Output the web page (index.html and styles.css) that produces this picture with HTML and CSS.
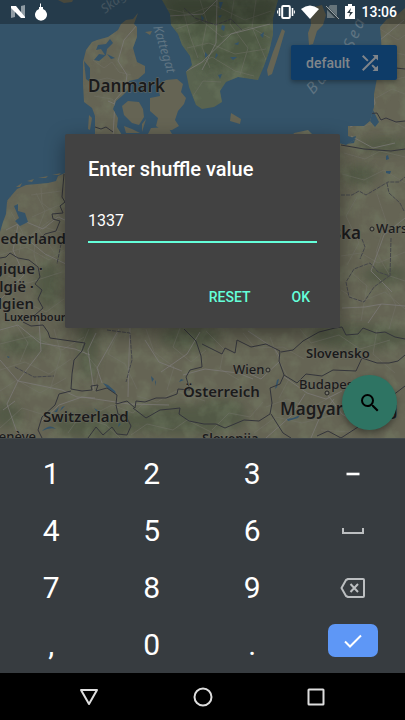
FILE: index.html
```html
<!DOCTYPE html>
<html lang="en">
<head>
<meta charset="utf-8">
<meta name="viewport" content="width=device-width, initial-scale=1">
<title>Enter shuffle value</title>
<link rel="stylesheet" href="styles.css">
</head>
<body>
<div class="stage">
  <svg class="map" viewBox="0 0 405 438" preserveAspectRatio="xMidYMin slice" role="img" aria-label="Map of Central Europe">
    <defs>
      <filter id="soft" x="-20%" y="-20%" width="140%" height="140%"><feGaussianBlur stdDeviation="5"/></filter>
      <filter id="relief" x="0" y="0" width="100%" height="100%">
        <feTurbulence type="fractalNoise" baseFrequency="0.06" numOctaves="4" seed="8"/>
        <feColorMatrix values="0 0 0 0 0.22  0 0 0 0 0.28  0 0 0 0 0.17  0 3 0 0 -1.3"/>
      </filter>
      <clipPath id="landclip">
        <path id="mainland" d="M0 232L3 222 6 214 7 202 11 196 17 189 26 185 37 184 48 183 56 181 58 176 65 173 75 150 95 134 95 116 92 108 84 102 83 84 83 62 86 50 92 42 97 40 108 37 118 30 121 24 126 20 133 19 138 13 134 24 137 27 137 37 133 48 137 62 145 66 145 73 138 79 129 81 130 88 122 96 116 101 113 109 118 118 117 127 125 140H290L294 133 308 130 314 136 346 145 356 139 348 136V126L364 126 370 121 374 107 374 94 377 78 382 58 381 38 380 27 387 19 396 16 405 8V438H0Z"/>
        <path id="sweden" d="M162 0L170 14 171 25 178 34 182 45 190 56 192 65 186 72 189 87 196 105 202 109 214 107 222 102 220 91 226 82 238 77 258 80 264 66 269 52 273 35 273 18 278 0Z"/>
      </clipPath>
    </defs>
    <rect class="sea" width="405" height="438"/>
    <use href="#mainland" class="land"/>
    <use href="#sweden" class="land green"/>
    <g class="land">
      <path d="M58 0H73L72 2 64 3Z"/>
      <path d="M145 32L152 31 150 35Z"/>
      <path d="M122 106L128 101 139 102 143 109 144 117 139 125 132 123 124 115Z"/>
      <path d="M150 98L160 96 158 86 166 80 177 79 183 84 181 92 186 98 184 104 178 111 175 120 179 126 172 130 163 131 156 126 158 118 150 111Z"/>
      <path d="M124 126L132 129 140 133 126 133ZM142 124L146 119 142 132ZM151 128L168 127 172 134H148Z"/>
      <path d="M282 29L285 31 278 55 272 74 268 76 267 70 273 52Z"/>
      <path d="M310 8L322 5 326 15 323 25 317 31 313 44 309 45 308 33 311 25Z"/>
      <path d="M231 113L241 119 240 124 230 121Z"/>
      <path d="M89 115L92 118 90 130 88 129Z"/>
      <path d="M7 201L10 197 9 202ZM16 187L22 183 20 187ZM27 181L34 179 32 182ZM38 178L48 176 46 178ZM52 175L61 173 59 175Z"/>
    </g>
    <g clip-path="url(#landclip)">
      <g class="forest" filter="url(#soft)">
        <path d="M165 0H275L260 75 230 65 208 75 190 50Z"/>
        <ellipse cx="385" cy="145" rx="28" ry="7"/>
        <ellipse cx="360" cy="175" rx="16" ry="10"/>
        <ellipse cx="48" cy="285" rx="12" ry="24"/>
        <ellipse cx="88" cy="350" rx="9" ry="30"/>
        <ellipse cx="22" cy="345" rx="24" ry="10"/>
        <ellipse cx="180" cy="420" rx="66" ry="15"/>
        <ellipse cx="190" cy="338" rx="30" ry="12"/>
        <ellipse cx="360" cy="337" rx="50" ry="13"/>
        <ellipse cx="220" cy="411" rx="25" ry="12"/>
        <ellipse cx="385" cy="275" rx="22" ry="9"/>
        <ellipse cx="96" cy="425" rx="44" ry="14"/>
        <ellipse cx="7" cy="415" rx="15" ry="12"/>
      </g>
      <rect class="relief" width="405" height="438" filter="url(#relief)"/>
      <g class="minor">
        <path d="M93 60L104 68 112 62 119 72 131 75M90 82L107 78 122 82M94 96L112 99 119 108M123 110L141 112M160 100L174 104 182 97M170 119L181 101"/>
        <path d="M164 8L190 14 214 5 245 20 271 11M176 29L201 20 222 37 250 27 270 38M187 48L209 43 235 54 266 49M190 69L212 57 235 71 254 76M193 96L203 81 221 82M200 0L207 22 202 47 210 68M234 0L230 24 248 48 240 75M256 0L252 27 266 60M183 10L190 36 198 58"/>
        <path d="M14 230L29 238 44 227 64 233M11 212L23 233 19 254M36 193L45 211 38 229 54 252M0 255L26 247 49 260 64 250M8 276L28 283 62 272M0 306L29 304 46 312 64 299M14 321L28 343 20 362M0 344L32 336 62 350 84 337M0 370L25 362 49 374 71 359M54 329L61 354 50 390M0 391L17 380 40 393 66 378M0 428L22 408 48 416M89 329L81 348 99 370 95 388M118 333L108 354 125 364 137 389M146 329L154 352 174 367 167 390M180 328L173 347 191 362 206 350M206 331L224 349 220 369 239 380M243 333L255 348 283 347 304 359M270 337L279 361 289 379 279 398M266 407L287 399 310 408 338 393M254 433L276 417 302 423 334 415M300 329L311 343 339 335 360 349 390 340M377 330L373 354 395 373M344 153L365 159 380 151 405 157M342 174L364 180 384 170 405 183M357 197L346 216 359 243 347 265M377 194L386 221 376 252 390 276 405 281M341 256L361 253 378 263 405 252M341 290L360 302 385 292 405 309M352 273L367 286 361 321M384 284L396 305 389 329M377 27L398 40 405 35M382 49L405 55M379 73L393 80 405 77M376 98L392 89 405 94M362 127L387 118 405 128"/>
        <path d="M96 413L112 405 133 413 147 401M68 433L80 416 106 425 120 438M131 435L147 424 173 430 187 420 211 432M137 396L157 402 176 391 205 401M212 430L229 413 250 417 263 402M321 430L349 432 374 420M10 175V183M18 245L31 235 60 213M31 195L61 191M59 205L32 217M36 232L34 254 39 273M41 188L42 203 64 220"/>
      </g>
      <g class="major">
        <path d="M137 25L124 40 118 61 127 75 125 89 115 100 113 137M108 101L117 105 140 113 160 107 180 102"/>
        <path d="M202 70L216 43 217 0M185 72L202 62 231 34 270 24M168 16L203 14 217 0"/>
        <path d="M6 230L24 221 43 229 58 217 65 220M3 244L26 238 45 254 66 264M18 225L13 250 24 275 0 300M0 330L18 325 40 343 75 349 90 355M39 321L41 351 18 381 7 404 19 438M0 360L18 381 62 390 77 397 95 398M15 401L3 410M96 333L88 350 94 391M119 329L97 368 102 383M130 328L129 356 128 397M145 340L159 362 182 371M200 332L187 354 161 372M169 405L129 404 82 397 59 405 42 421M183 375L205 369 238 373 253 379M248 331L275 349 280 358M280 361L261 379 250 374M283 376L307 393 326 399 342 391M327 394L342 414 359 424M305 394L291 416 266 438M334 399L319 419 311 438M342 308L365 307 382 304 405 306M381 304L368 323M405 218L384 235 371 271 392 292"/>
        <path d="M404 20L379 41 374 68M372 90L375 103 366 120 350 127M351 136L373 148 395 143"/>
      </g>
      <g class="water">
        <path d="M94 60L99 54 105 55 101 49 96 50 98 45 106 44 110 39 113 43 107 49 106 55 99 61Z"/>
        <path d="M84 61L90 68 90 82 86 79ZM126 93L134 91 128 97ZM107 54L115 58 111 59Z"/>
        <path d="M14 206L18 204 18 211 25 213 28 222 20 226 15 221 19 218Z"/>
        <path d="M164 52L179 60 174 65ZM170 37L176 43 174 45ZM219 2H223L220 10ZM222 25L225 26 224 31 221 29ZM201 15L204 18 202 22ZM234 44L239 42 238 45ZM216 53L218 55 215 59Z"/>
        <path d="M230 57L237 57 233 60ZM205 52L208 55 205 58ZM218 75L222 74 220 79ZM260 35L264 32 263 38ZM218 16L222 15 220 18Z"/>
        <path d="M372 108L379 122 375 127 370 121ZM386 156L388 155 389 159 386 160ZM386 171L391 171 390 174 386 173ZM350 138L356 136 354 143 346 144Z"/>
        <path d="M103 383L108 385 115 391 116 394 108 389ZM42 431Q50 423 56 429Q50 427 42 431ZM54 412L59 407 57 412ZM94 408L99 411 97 412ZM88 416L93 417 92 419ZM62 407L65 406 60 411Z"/>
        <path d="M287 419L293 418 300 415 298 418 288 421ZM277 380L279 379 277 387 275 389ZM151 376L154 379 152 382ZM181 379L184 380 179 382ZM155 380L156 382 155 386ZM119 423L121 424 118 427ZM7 356L10 357 8 358Z"/>
      </g>
      <g class="border">
        <path d="M95 127L101 129 106 127 113 132"/>
        <path d="M64 174L62 197 65 202 60 206 63 213 52 214 53 219 60 221 56 231 45 234 39 240M0 258L6 257 10 253 18 258 29 260 38 267 40 277 35 284 42 290 38 299 43 308 35 315 23 320M23 322L31 326 43 325 48 332 50 338 85 343 82 351 74 360 72 374 71 389 82 391 92 390 91 386 98 385 96 391 107 388 117 395 116 404 127 401 135 408 136 401 145 402 156 398 166 398 177 394 178 389 190 390 186 377 190 370 202 367 201 356 196 341 184 329"/>
        <path d="M71 391L59 394 55 405 42 417 38 430 42 438M116 405L118 414 127 418 131 426 127 435 117 434 112 427 103 435 96 427 88 438M133 408L146 418 160 410 171 409 180 408 179 414 189 421 204 424 216 424 225 428 244 420 259 421 270 414 272 403 270 388 280 384 284 375 279 361 280 351 266 344 251 347 237 340 235 353 225 348 222 354 202 344"/>
        <path d="M281 352L293 350 303 341 319 332 335 328 342 327 346 335 358 334 363 328 376 333 385 332 395 337 405 339M284 375L297 383 306 374 322 376 333 370 356 371 362 358 377 363 389 363 398 361 405 355M271 414L283 433 291 438M317 436L328 431 341 438 358 427 373 414 384 402 405 386"/>
        <path d="M341 145L364 149 391 151 405 149M364 114L377 113 381 120 386 118 396 122 405 121M396 68L405 69"/>
        <path class="region" d="M341 195L352 195 359 191 366 195 388 182 399 182 405 177M387 183L389 193 400 203 404 211M391 238L390 276 378 272 370 263 354 269 346 282 349 297 364 302 374 287 389 276M362 239L365 247 360 259M61 244L57 264M107 330L130 333 132 360 126 382M15 367L34 377 54 376M184 8L195 18 216 25 231 19 242 30"/>
      </g>
    </g>
    <g class="city-dots"><circle cx="372" cy="229" r="2"/><circle cx="268" cy="370" r="2"/><circle cx="327" cy="393" r="2"/></g>
    <g class="sea-label">
      <text transform="translate(105 14) rotate(-38)">Skagerrak</text>
      <text transform="translate(153 27) rotate(73)">Kattegat</text>
      <text class="wide" transform="translate(313 95) rotate(-48)">Baltic</text>
      <text class="wide" transform="translate(353 50) rotate(-67)">Sea</text>
    </g>
    <g class="country">
      <text class="big" x="88" y="92">Danmark</text>
      <text class="mid" x="66" y="244" text-anchor="end">Nederland</text>
      <text class="mid" x="43" y="274" text-anchor="end">Belgique ·</text>
      <text class="mid" x="34" y="292" text-anchor="end">België ·</text>
      <text class="mid" x="34" y="309" text-anchor="end">Belgien</text>
      <text class="tiny" x="4" y="321">Luxembourg</text>
      <text class="big" x="361" y="239" text-anchor="end">Polska</text>
      <text class="mid" x="43" y="422">Switzerland</text>
      <text class="mid" x="183" y="397">Österreich</text>
      <text class="small" x="306" y="358">Slovensko</text>
      <text class="big" x="280" y="415">Magyarország</text>
      <text class="small" x="202" y="443">Slovenija</text>
    </g>
    <g class="city">
      <text x="376" y="233">Warszawa</text>
      <text x="233" y="374">Wien</text>
      <text x="299" y="389">Budapest</text>
      <text x="36" y="441" text-anchor="end">Genève</text>
    </g>
  </svg>

  <header class="status">
    <div class="status-group">
      <svg width="16" height="16" viewBox="0 0 16 16" aria-hidden="true"><path d="M1 3L5 2V13L1 14ZM11 2L15 1V13L11 14Z" fill="#8f9ba3"/><path d="M1 2H6L15 13V14H11L1 4Z" fill="#fff"/></svg>
      <svg width="14" height="18" viewBox="0 0 14 18" aria-hidden="true"><path d="M6 0L7 1V4H9V6A6 6 0 1 1 5 6V4H6Z" fill="#fff"/></svg>
    </div>
    <div class="status-group end">
      <svg width="18" height="16" viewBox="0 0 18 16" fill="none" stroke="#fff" aria-hidden="true"><rect x="5.2" y="2" width="7.6" height="12" rx="1" stroke-width="2"/><path d="M2.5 4V12M15.5 4V12" stroke-width="1.6"/><path d="M.6 6.5V9.5M17.4 6.5V9.5"/></svg>
      <svg width="18" height="16" viewBox="0 0 18 16" aria-hidden="true"><path d="M0 5Q9-2 18 5L9 15Z" fill="#fff"/></svg>
      <svg width="14" height="16" viewBox="0 0 14 16" aria-hidden="true"><path d="M5 1H12V14H2V5Z" fill="#66747a"/><path d="M0 2L13 15" stroke="#2b3a42" stroke-width="2.5"/><path d="M1 2L14 15" stroke="#98a1a5"/></svg>
      <svg width="10" height="16" viewBox="0 0 10 16" aria-hidden="true"><path d="M3 0H7V2H10V15H0V2H3Z" fill="#fff"/><path d="M6 4L2 9H5L4 13 8 8H5Z" fill="#2d3a42"/></svg>
      <time>13:06</time>
    </div>
  </header>

  <main class="content">
    <button class="profile" type="button">default
      <svg width="24" height="24" viewBox="0 0 24 24" aria-hidden="true"><path fill="currentColor" d="M10.59 9.17L5.41 4 4 5.41l5.17 5.17 1.42-1.41zM14.5 4l2.04 2.04L4 18.59 5.41 20 17.96 7.46 20 9.5V4h-5.5zm.33 9.41l-1.41 1.41 3.13 3.13L14.5 20H20v-5.5l-2.04 2.04-3.13-3.13z"/></svg>
    </button>
    <form class="dialog" role="dialog" aria-labelledby="title">
      <h1 id="title"><label for="value">Enter shuffle value</label></h1>
      <input id="value" type="text" inputmode="numeric" value="1337">
      <div class="actions">
        <button type="reset">RESET</button>
        <button type="button">OK</button>
      </div>
    </form>
    <button class="search" type="button" aria-label="Search">
      <svg width="24" height="24" viewBox="0 0 24 24" aria-hidden="true"><path d="M15.5 14h-.79l-.28-.27A6.471 6.471 0 0 0 16 9.5 6.5 6.5 0 1 0 9.5 16c1.61 0 3.09-.59 4.23-1.57l.27.28v.79l5 4.99L20.49 19l-4.99-5zm-6 0C7.01 14 5 11.99 5 9.5S7.01 5 9.5 5 14 7.01 14 9.5 11.99 14 9.5 14z"/></svg>
    </button>
  </main>
</div>

<section class="keypad" aria-label="Number keyboard">
  <button type="button">1</button><button type="button">2</button><button type="button">3</button>
  <button type="button" aria-label="Minus"><svg width="24" height="24" viewBox="0 0 24 24" aria-hidden="true"><path d="M5.5 12H18.5" stroke="#fff" stroke-width="2.6"/></svg></button>
  <button type="button">4</button><button type="button">5</button><button type="button">6</button>
  <button type="button" aria-label="Space"><svg width="24" height="24" viewBox="0 0 24 24" aria-hidden="true"><path d="M2 9V14H22V9" fill="none" stroke="#bcbfc1" stroke-width="2"/></svg></button>
  <button type="button">7</button><button type="button">8</button><button type="button">9</button>
  <button type="button" aria-label="Delete"><svg width="26" height="24" viewBox="0 0 26 24" fill="none" stroke="#bcbfc1" stroke-width="2" aria-hidden="true"><path d="M8 3H23Q24 3 24 4V20Q24 21 23 21H8L6 20 1.5 12 6 4Z" stroke-linejoin="round"/><path d="M10.5 8L18 16M18 8L10.5 16"/></svg></button>
  <button type="button">,</button><button type="button">0</button><button type="button">.</button>
  <button class="enter" type="button" aria-label="Done"><svg width="24" height="24" viewBox="0 0 24 24" aria-hidden="true"><path d="M4 12.5L9 17.5 20 6.5" fill="none" stroke="#fff" stroke-width="2"/></svg></button>
</section>

<nav class="system" aria-label="System">
  <button type="button" aria-label="Back"><svg width="24" height="24" viewBox="0 0 24 24" aria-hidden="true"><path d="M4 5H20L12 19Z"/></svg></button>
  <button type="button" aria-label="Home"><svg width="24" height="24" viewBox="0 0 24 24" aria-hidden="true"><circle cx="12" cy="12" r="8.5"/></svg></button>
  <button type="button" aria-label="Recent apps"><svg width="24" height="24" viewBox="0 0 24 24" aria-hidden="true"><rect x="4.500" y="4.500" width="15" height="15" rx=".5"/></svg></button>
</nav>
</body>
</html>
```
FILE: styles.css
```css
* {
  box-sizing: border-box;
}

body {
  margin: 0;
  min-height: 100vh;
  display: flex;
  flex-direction: column;
  background: #000;
  color: #fff;
  font-family: Roboto, "Liberation Sans", sans-serif;
}

button {
  margin: 0;
  padding: 0;
  border: 0;
  background: none;
  color: inherit;
  font: inherit;
}

svg {
  display: block;
  flex: none;
}

.stage {
  position: relative;
  flex: 1;
  display: flex;
  flex-direction: column;
  overflow: hidden;
}

.map {
  position: absolute;
  inset: 0;
  width: 100%;
  height: 100%;
}

.sea, .water {
  fill: #345369;
}

.land {
  fill: #656454;
}

.green {
  fill: #59634f;
}

.forest {
  fill: #46523d;
  opacity: 0.6;
}

.relief {
  opacity: 0.25;
}

.minor, .major, .border {
  fill: none;
  stroke-linejoin: round;
}

.minor {
  stroke: #75746c;
  opacity: 0.45;
}

.major {
  stroke: #7c7a78;
  opacity: 0.75;
}

.border {
  stroke: #34353b;
}

.region {
  stroke: #45464a;
  stroke-dasharray: 4 1;
}

.city-dots {
  fill: #77776d;
  stroke: #222;
}

.sea-label {
  fill: #5f7482;
  font: italic 13px "Noto Sans", sans-serif;
}

.sea-label .wide {
  font-size: 16px;
  letter-spacing: 3px;
}

.country, .city {
  fill: #1b1b1b;
  stroke: #6d6c63;
  stroke-width: 1px;
  stroke-linejoin: round;
  paint-order: stroke;
  font-family: "Noto Sans", "Open Sans", sans-serif;
  font-weight: 600;
}

.big {
  font-size: 17px;
}

.mid {
  font-size: 15px;
}

.small {
  font-size: 13px;
}

.tiny {
  font-size: 11px;
}

.city {
  font-size: 13px;
  font-weight: 500;
}

.status {
  position: relative;
  height: 24px;
  padding: 0 8px 0 10px;
  display: flex;
  align-items: center;
  justify-content: space-between;
  background: rgba(0, 0, 0, 0.28);
  font-size: 14px;
  font-weight: 500;
}

.status-group {
  display: flex;
  align-items: center;
  gap: 8px;
}

.status-group.end {
  gap: 6px;
}

.content {
  position: relative;
  flex: 1;
  display: grid;
  align-items: center;
  padding: 0 65px;
}

.profile {
  position: absolute;
  top: 21px;
  right: 8px;
  height: 35px;
  padding: 0 15px;
  display: flex;
  align-items: center;
  gap: 8px;
  border-radius: 2px;
  background: #0e3c68;
  box-shadow: 0 2px 5px rgba(0, 0, 0, 0.35);
  color: #80858a;
  font-size: 14px;
  font-weight: 500;
}

.dialog {
  padding: 23px 23px 19px;
  border-radius: 2px;
  background: #424242;
  box-shadow: 0 6px 20px rgba(0, 0, 0, 0.4);
}

.dialog h1 {
  margin: 0 0 25px;
  font-size: 20px;
  line-height: 24px;
  font-weight: 500;
}

.dialog input {
  display: block;
  width: 100%;
  height: 37px;
  padding: 0 0 6px;
  border: 0;
  border-bottom: 2px solid #64ffda;
  border-radius: 0;
  outline: 0;
  background: none;
  color: #fff;
  font: 16px/24px Roboto, sans-serif;
}

.actions {
  margin-top: 42px;
  margin-right: -1px;
  display: flex;
  justify-content: flex-end;
  gap: 25px;
  color: #64ffda;
  font-size: 14px;
  font-weight: 500;
}

.actions button {
  height: 24px;
  padding: 0 8px;
}

.search {
  position: absolute;
  right: 8px;
  bottom: 8px;
  width: 55px;
  height: 55px;
  display: grid;
  place-items: center;
  border-radius: 50%;
  background: #2e7463;
  box-shadow: 0 3px 7px rgba(0, 0, 0, 0.4);
}

.keypad {
  padding: 6px 2px 0 1px;
  display: grid;
  grid-template-columns: repeat(4, 1fr);
  grid-template-rows: repeat(4, 57px);
  border-top: 1px solid #41474a;
  background: #373c40;
  font-size: 30px;
}

.keypad button {
  display: grid;
  place-items: center;
}

.keypad .enter {
  width: 50px;
  height: 33px;
  margin-top: 8px;
  justify-self: center;
  border-radius: 7px;
  background: #5e97f6;
}

.system {
  height: 47px;
  padding: 0 8%;
  display: grid;
  grid-template-columns: repeat(3, 1fr);
  background: #000;
}

.system button {
  display: grid;
  place-items: center;
}

.system svg {
  fill: none;
  stroke: #dedede;
  stroke-width: 2px;
  stroke-linejoin: round;
}
```
